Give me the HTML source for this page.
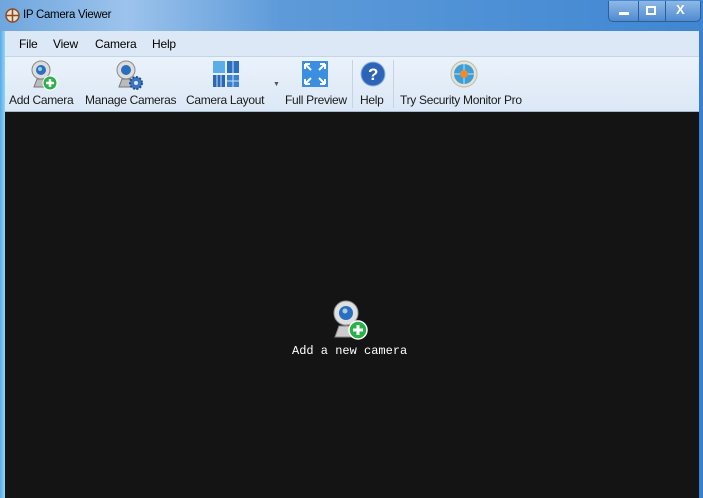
<!DOCTYPE html><html><head><style>
body{margin:0;width:703px;height:498px;overflow:hidden;background:#4a8fd6;font-family:"Liberation Sans",sans-serif;position:relative}
.tb{position:absolute;left:0;top:0;width:703px;height:31px;background:linear-gradient(90deg,#6fa6de 0%,#9cc3ec 18%,#5d9ad9 40%,#3f86d2 100%)}
.lb{position:absolute;left:0;top:31px;width:5px;height:467px;background:linear-gradient(90deg,#5aa9e8,#8fd6f6)}
.rb{position:absolute;left:699px;top:31px;width:4px;height:467px;background:#3d7fcf}
.title{position:absolute;left:23px;top:9px;font-size:11.5px;color:#000;letter-spacing:-0.3px}
.menu{position:absolute;left:5px;top:31px;width:694px;height:25px;background:#dce8f5;border-bottom:1px solid #c5d5e8;font-size:12px;letter-spacing:-0.2px}
.menu span{position:absolute;top:6px}
.tool{position:absolute;left:5px;top:57px;width:694px;height:54px;background:linear-gradient(#eaf2fb,#dce8f6);border-bottom:1px solid #a7b9cf;font-size:12px;color:#1a1a1a;letter-spacing:-0.3px}
.tool .l{position:absolute;top:36px;white-space:nowrap}
.main{position:absolute;left:5px;top:112px;width:694px;height:386px;background:#141414}
.sep{position:absolute;top:3px;width:1px;height:48px;background:#c5d3e3}
.btns{position:absolute;left:608px;top:1px;width:91px;height:20px;border:1px solid #2c5e9b;border-top:none;border-radius:0 0 5px 5px;background:linear-gradient(#8fb8e6,#4f8bd0)}
</style></head><body>
<div class="tb"></div>
<svg style="position:absolute;left:5px;top:8px" width="15" height="15"><circle cx="7.5" cy="7.5" r="6.5" fill="#f1e0c8" stroke="#8a4a2a" stroke-width="1.5"/><path d="M7.5 1v13M1 7.5h13" stroke="#8a4a2a" stroke-width="1.5"/></svg>
<div class="title">IP Camera Viewer</div>
<div class="btns"><div style="position:absolute;left:29px;top:0;width:1px;height:20px;background:#2c5e9b"></div><div style="position:absolute;left:56px;top:0;width:1px;height:20px;background:#2c5e9b"></div>
<div style="position:absolute;left:10px;top:11px;width:10px;height:3px;background:#fff"></div>
<div style="position:absolute;left:37px;top:5px;width:6px;height:5px;border:2px solid #fff"></div>
<div style="position:absolute;left:67px;top:1px;color:#fff;font-weight:bold;font-size:13px">X</div></div>
<div class="lb"></div><div class="rb"></div>
<div class="menu"><span style="left:14px">File</span><span style="left:48px">View</span><span style="left:90px">Camera</span><span style="left:147px">Help</span></div>
<div class="tool">
<svg style="position:absolute;left:25px;top:3px" width="30" height="32"><circle cx="11" cy="10" r="9" fill="#ddd" stroke="#888"/><circle cx="11" cy="10" r="5" fill="#2a6fbf"/><circle cx="10" cy="9" r="2" fill="#9cd"/><path d="M4 27h14l-3-8h-8z" fill="#bbb" stroke="#777"/><circle cx="20" cy="23" r="7" fill="#2bb14a" stroke="#fff"/><path d="M20 19v8M16 23h8" stroke="#fff" stroke-width="2.5"/></svg>
<svg style="position:absolute;left:110px;top:3px" width="30" height="32"><circle cx="11" cy="10" r="9" fill="#ddd" stroke="#888"/><circle cx="11" cy="10" r="5" fill="#2a6fbf"/><path d="M4 27h14l-3-8h-8z" fill="#bbb" stroke="#777"/><circle cx="21" cy="23" r="6" fill="#3a76c4" stroke="#214f8f" stroke-width="2" stroke-dasharray="2 1.5"/><circle cx="21" cy="23" r="2" fill="#dbe8f5"/></svg>
<svg style="position:absolute;left:207px;top:3px" width="28" height="28"><rect x="1" y="1" width="12" height="12" fill="#5aaee8"/><rect x="15" y="1" width="12" height="12" fill="#2c6fc0"/><rect x="1" y="15" width="12" height="12" fill="#2a67b5"/><rect x="15" y="15" width="12" height="12" fill="#3c82cf"/><path d="M5 15v12M9 15v12M21 15v12M15 21h12M21 1v12" stroke="#cfe3f7"/></svg>
<div style="position:absolute;left:268px;top:24px;font-size:7px;color:#555">▼</div>
<svg style="position:absolute;left:296px;top:3px" width="28" height="28"><rect x="1" y="1" width="26" height="26" fill="#3b8ee0"/><path d="M4 4l6 6M4 4v5M4 4h5M24 4l-6 6M24 4v5M24 4h-5M4 24l6-6M4 24v-5M4 24h5M24 24l-6-6M24 24v-5M24 24h-5" stroke="#fff" stroke-width="2"/></svg>
<div class="sep" style="left:347px"></div>
<svg style="position:absolute;left:355px;top:4px" width="26" height="26"><circle cx="13" cy="13" r="12" fill="#2e64b8" stroke="#8fb2e0"/><text x="13" y="19" text-anchor="middle" font-size="17" font-weight="bold" fill="#fff" font-family="Liberation Sans">?</text></svg>
<div class="sep" style="left:388px"></div>
<svg style="position:absolute;left:445px;top:3px" width="28" height="28"><circle cx="14" cy="14" r="13" fill="#e8e2d2" stroke="#bba"/><circle cx="14" cy="14" r="10" fill="#3d9fd8"/><path d="M14 4v20M4 14h20" stroke="#cde"/><circle cx="14" cy="14" r="4" fill="#f08a30"/></svg>
<span class="l" style="left:4px">Add Camera</span><span class="l" style="left:80px">Manage Cameras</span><span class="l" style="left:181px">Camera Layout</span><span class="l" style="left:280px">Full Preview</span><span class="l" style="left:355px">Help</span><span class="l" style="left:395px">Try Security Monitor Pro</span>
</div>
<div class="main">
<svg style="position:absolute;left:325px;top:187px" width="40" height="42"><circle cx="16" cy="14" r="12" fill="#e0e0e0" stroke="#999"/><circle cx="16" cy="14" r="7" fill="#2a6fbf"/><circle cx="15" cy="12" r="2.5" fill="#acd"/><path d="M5 38h20l-4-11h-12z" fill="#ccc" stroke="#888"/><circle cx="28" cy="31" r="9" fill="#2bb14a" stroke="#fff" stroke-width="1.5"/><path d="M28 26v10M23 31h10" stroke="#fff" stroke-width="3"/></svg>
<div style="position:absolute;left:287px;top:232px;color:#fff;font-family:'Liberation Mono',monospace;font-size:12px">Add a new camera</div>
</div>
</body></html>
